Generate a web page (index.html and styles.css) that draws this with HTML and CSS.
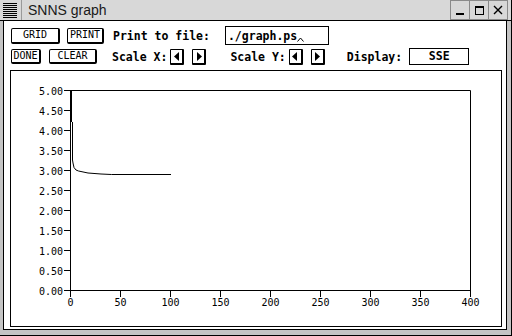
FILE: index.html
```html
<!DOCTYPE html>
<html lang="en">
<head>
  <meta charset="UTF-8" />
  <title>SNNS graph</title>
  <link rel="stylesheet" href="styles.css">
</head>
<body>

  <div class="window">
    <div class="titlebar">
      <div class="menu-icon"></div>
      <div class="title">SNNS graph</div>
      <div class="win-buttons">
        <div class="win-btn"><svg width="12" height="12" viewBox="0 0 12 12"><rect x="2" y="9" width="8" height="2" fill="#000"/></svg></div>
        <div class="win-btn"><svg width="12" height="12" viewBox="0 0 12 12"><rect x="2.5" y="2.5" width="8" height="8" fill="none" stroke="#000"/><rect x="2" y="2" width="9" height="2" fill="#000"/></svg></div>
        <div class="win-btn"><svg width="12" height="12" viewBox="0 0 12 12"><path d="M2 2 L10 10 M10 2 L2 10" stroke="#000" stroke-width="1.4"/></svg></div>
      </div>
    </div>

    <div class="client">
      <div class="row row-top">
        <button class="btn btn-grid">GRID</button>
        <button class="btn btn-print">PRINT</button>
        <span class="label label-file">Print to file:</span>
        <div class="field">./graph.ps<svg class="caret" width="7" height="5" viewBox="0 0 7 5"><path d="M0.5 4.5 L3.5 1 L6.5 4.5" fill="none" stroke="#000"/></svg></div>
      </div>

      <div class="row row-bottom">
        <button class="btn btn-done">DONE</button>
        <button class="btn btn-clear">CLEAR</button>
        <span class="label label-sx">Scale X:</span>
        <button class="arrow arrow-first"><svg width="6" height="9" viewBox="0 0 6 9"><path d="M5 0 L5 9 L0 4.5 Z" fill="#000"/></svg></button>
        <button class="arrow arrow-second"><svg width="6" height="9" viewBox="0 0 6 9"><path d="M1 0 L1 9 L6 4.5 Z" fill="#000"/></svg></button>
        <span class="label label-sy">Scale Y:</span>
        <button class="arrow arrow-first"><svg width="6" height="9" viewBox="0 0 6 9"><path d="M5 0 L5 9 L0 4.5 Z" fill="#000"/></svg></button>
        <button class="arrow arrow-second"><svg width="6" height="9" viewBox="0 0 6 9"><path d="M1 0 L1 9 L6 4.5 Z" fill="#000"/></svg></button>
        <span class="label label-display">Display:</span>
        <div class="display-box">SSE</div>
      </div>

      <div class="plot">
        <svg id="chart" width="490" height="255" viewBox="0 0 490 255"></svg>
      </div>
    </div>
  </div>

  <script>
    const chart = document.getElementById('chart');
    const NS = 'http://www.w3.org/2000/svg';

    // plot area inside the svg
    const plotLeft = 59, plotTop = 19, plotW = 400, plotH = 200;

    function add(tag, attrs, text) {
      const el = document.createElementNS(NS, tag);
      for (const k in attrs) el.setAttribute(k, attrs[k]);
      if (text) el.textContent = text;
      chart.appendChild(el);
      return el;
    }

    // frame of the plot
    add('path', {
      d: `M${plotLeft + 0.5} ${plotTop + 0.5} H${plotLeft + plotW + 0.5} V${plotTop + plotH + 0.5} H${plotLeft + 0.5} Z`,
      fill: 'none', stroke: '#000'
    });

    // y axis ticks
    for (let i = 0; i <= 10; i++) {
      const y = plotTop + i * 20 + 0.5;
      add('line', { x1: plotLeft - 6, y1: y, x2: plotLeft, y2: y, stroke: '#000' });
      add('text', { x: plotLeft - 7, y: y + 4, 'text-anchor': 'end', class: 'tick' }, (5 - i * 0.5).toFixed(2));
    }

    // x axis ticks
    for (let i = 0; i <= 8; i++) {
      const x = plotLeft + i * 50 + 0.5;
      add('line', { x1: x, y1: plotTop + plotH, x2: x, y2: plotTop + plotH + 7, stroke: '#000' });
      add('text', { x: x, y: plotTop + plotH + 16, 'text-anchor': 'middle', class: 'tick' }, String(i * 50));
    }

    // SSE curve
    add('rect', { x: plotLeft, y: plotTop, width: 2, height: 32, fill: '#000' });
    add('path', {
      d: 'M61.5 51 L61.5 89 L62 92 L63 96.5 L65 99 L67.5 100 L77 102 L90 103 L100.5 103.5 L160 103.5',
      fill: 'none', stroke: '#000'
    });
  </script>

</body>
</html>
```

FILE: styles.css
```css
body {
  margin: 0;
  padding: 0;
  background-color: #c4c4c4;
}

.window {
  width: 512px;
  height: 336px;
  box-sizing: border-box;
  display: flex;
  flex-direction: column;
  background-color: #c4c4c4;
  border-right: 1px solid #000;
  border-bottom: 1px solid #000;
}

.titlebar {
  height: 21px;
  box-sizing: border-box;
  display: flex;
  align-items: center;
  background-color: #d8d8d8;
  border-bottom: 1px solid #000;
}

.menu-icon {
  width: 14px;
  height: 15px;
  margin: 0 4px 0 3px;
  background: repeating-linear-gradient(to bottom, #000 0, #000 1px, transparent 1px, transparent 2px);
}

.title {
  height: 20px;
  line-height: 20px;
  padding-left: 6px;
  border-left: 1px solid #9a9a9a;
  font-family: "Liberation Sans", Arial, sans-serif;
  font-size: 14px;
  color: #1a1a1a;
}

.win-buttons {
  margin-left: auto;
  margin-right: 3px;
  display: flex;
}

.win-btn {
  width: 18px;
  height: 18px;
  display: flex;
  align-items: center;
  justify-content: center;
  border: 1px solid #8a8a8a;
  border-right: none;
  background-color: #d8d8d8;
}

.win-btn:last-child {
  border-right: 1px solid #8a8a8a;
}

.client {
  flex: 1;
  margin: 0 4px 5px 3px;
  background-color: #fff;
  border: 1px solid #000;
  border-top: none;
  display: flex;
  flex-direction: column;
}

.row {
  display: flex;
  align-items: center;
  padding-left: 7px;
}

.row-top {
  margin-top: 5px;
  height: 19px;
}

.row-bottom {
  margin-top: 3px;
  height: 17px;
}

.btn {
  height: 16px;
  box-sizing: border-box;
  padding: 0;
  margin: 0;
  background-color: #fff;
  border: 1px solid #000;
  border-right-width: 2px;
  border-bottom-width: 2px;
  border-radius: 2px;
  font-family: "DejaVu Sans Mono", monospace;
  font-size: 10px;
  line-height: 12px;
  color: #000;
}

.btn-grid { width: 49px; }
.btn-print { width: 37px; margin-left: 7px; }
.btn-done { width: 30px; height: 15px; }
.btn-clear { width: 48px; height: 15px; margin-left: 8px; }

.label {
  font-family: "DejaVu Sans Mono", monospace;
  font-weight: bold;
  font-size: 11.5px;
  color: #000;
  white-space: pre;
}

.label-file { margin-left: 9px; }
.label-sx { margin-left: 15px; }
.label-sy { margin-left: 24px; }
.label-display { margin-left: 22px; }

.field {
  width: 104px;
  height: 19px;
  box-sizing: border-box;
  margin-left: 15px;
  padding-left: 2px;
  border: 1px solid #000;
  display: flex;
  align-items: center;
  font-family: "DejaVu Sans Mono", monospace;
  font-weight: bold;
  font-size: 11.5px;
}

.caret {
  margin-top: 8px;
}

.arrow {
  width: 14px;
  height: 16px;
  box-sizing: border-box;
  padding: 0;
  margin: 0;
  background-color: #fff;
  border: 1px solid #000;
  border-right-width: 2px;
  border-bottom-width: 2px;
  border-radius: 1px;
  display: flex;
  align-items: center;
  justify-content: center;
}

.arrow-first { margin-left: 3px; }
.arrow-second { margin-left: 8px; }

.display-box {
  width: 60px;
  height: 17px;
  box-sizing: border-box;
  margin-left: 7px;
  border: 1px solid #000;
  text-align: center;
  font-family: "DejaVu Sans Mono", monospace;
  font-weight: bold;
  font-size: 11.5px;
  line-height: 15px;
}

.plot {
  width: 490px;
  height: 255px;
  margin: 5px 0 0 6px;
  border: 1px solid #000;
}

.plot svg {
  display: block;
}

.tick {
  font-family: "DejaVu Sans Mono", monospace;
  font-size: 10px;
  fill: #000;
}
```
